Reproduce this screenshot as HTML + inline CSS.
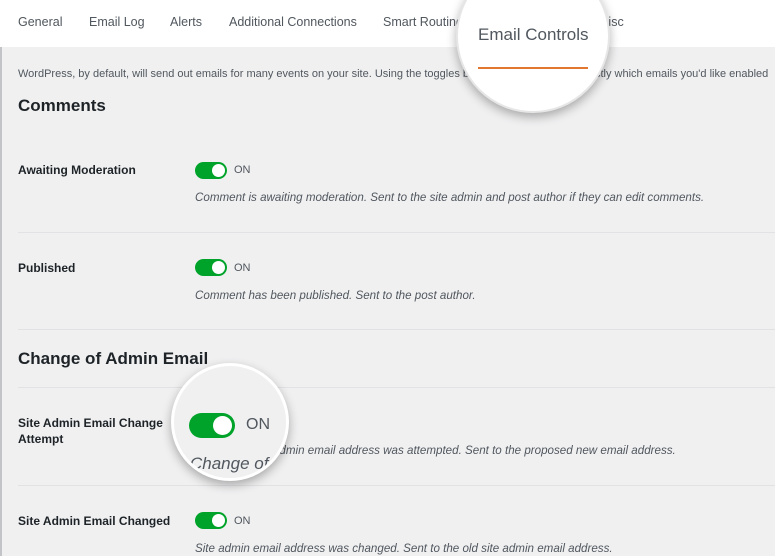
<!DOCTYPE html><html><head><style>
body{margin:0;width:775px;height:556px;overflow:hidden;background:#f0f0f1;font-family:"Liberation Sans",sans-serif;position:relative}
.a{position:absolute;white-space:nowrap}
.tabs{position:absolute;left:0;top:0;width:775px;height:47px;background:#fff}
.tab{position:absolute;top:15px;font-size:12.5px;color:#50575e}
.lab{font-size:12px;font-weight:bold;color:#1d2327}
.h{font-size:17px;font-weight:bold;color:#1d2327}
.tg{position:absolute;width:32px;height:17px;border-radius:9px;background:#00a32a}
.tg:after{content:"";position:absolute;right:2px;top:2px;width:13px;height:13px;border-radius:50%;background:#fff}
.on{font-size:11px;color:#50575e}
.d{font-size:11.6px;font-style:italic;color:#50575e}
.ln{position:absolute;left:18px;width:757px;height:1px;background:#e2e2e4}
</style></head><body>
<div style="position:absolute;left:0;top:0;width:2px;height:556px;background:#c3c4c7"></div>
<div class="tabs"></div>
<div class="tab" style="left:18px">General</div>
<div class="tab" style="left:89px">Email Log</div>
<div class="tab" style="left:170px">Alerts</div>
<div class="tab" style="left:229px">Additional Connections</div>
<div class="tab" style="left:383px">Smart Routing</div>
<div class="tab" style="left:598px">Misc</div>
<div class="a" style="left:18px;top:68px;font-size:11px;color:#50575e">WordPress, by default, will send out emails for many events on your site. Using the toggles below, you can choose exactly which emails you'd like enabled</div>
<div class="a h" style="left:18px;top:96px">Comments</div>
<div class="a lab" style="left:18px;top:163px">Awaiting Moderation</div>
<div class="tg" style="left:195px;top:162px"></div><div class="a on" style="left:234px;top:164px">ON</div>
<div class="a d" style="left:195px;top:191px">Comment is awaiting moderation. Sent to the site admin and post author if they can edit comments.</div>
<div class="ln" style="top:232px"></div>
<div class="a lab" style="left:18px;top:261px">Published</div>
<div class="tg" style="left:195px;top:259px"></div><div class="a on" style="left:234px;top:262px">ON</div>
<div class="a d" style="left:195px;top:289px">Comment has been published. Sent to the post author.</div>
<div class="ln" style="top:329px"></div>
<div class="a h" style="left:18px;top:349px">Change of Admin Email</div>
<div class="ln" style="top:387px"></div>
<div class="a lab" style="left:18px;top:415px;line-height:16px">Site Admin Email Change<br>Attempt</div>
<div class="a d" style="left:195px;top:444px">Change of site admin email address was attempted. Sent to the proposed new email address.</div>
<div class="ln" style="top:485px"></div>
<div class="a lab" style="left:18px;top:514px">Site Admin Email Changed</div>
<div class="tg" style="left:195px;top:512px"></div><div class="a on" style="left:234px;top:515px">ON</div>
<div class="a d" style="left:195px;top:542px">Site admin email address was changed. Sent to the old site admin email address.</div>
<div style="position:absolute;left:456px;top:-41px;width:150px;height:150px;border-radius:50%;background:#fff;border:2px solid #e6e6e6;box-shadow:0 4px 10px rgba(0,0,0,.3);overflow:hidden">
<div class="a" style="left:20px;top:64px;font-size:17px;color:#50575e">Email Controls</div>
<div style="position:absolute;left:20px;top:106px;width:110px;height:2px;background:#e27730"></div>
</div>
<div style="position:absolute;left:171px;top:363px;width:112px;height:112px;border-radius:50%;background:#f0f0f1;border:3px solid #fff;box-shadow:0 4px 10px rgba(0,0,0,.3);overflow:hidden">
<div style="position:absolute;left:15px;top:47px;width:46px;height:25px;border-radius:13px;background:#00a32a"><div style="position:absolute;right:3px;top:3px;width:19px;height:19px;border-radius:50%;background:#fff"></div></div>
<div class="a" style="left:72px;top:50px;font-size:16px;color:#50575e">ON</div>
<div class="a" style="left:16px;top:88px;font-size:17px;font-style:italic;color:#50575e">Change of</div>
</div>
</body></html>
